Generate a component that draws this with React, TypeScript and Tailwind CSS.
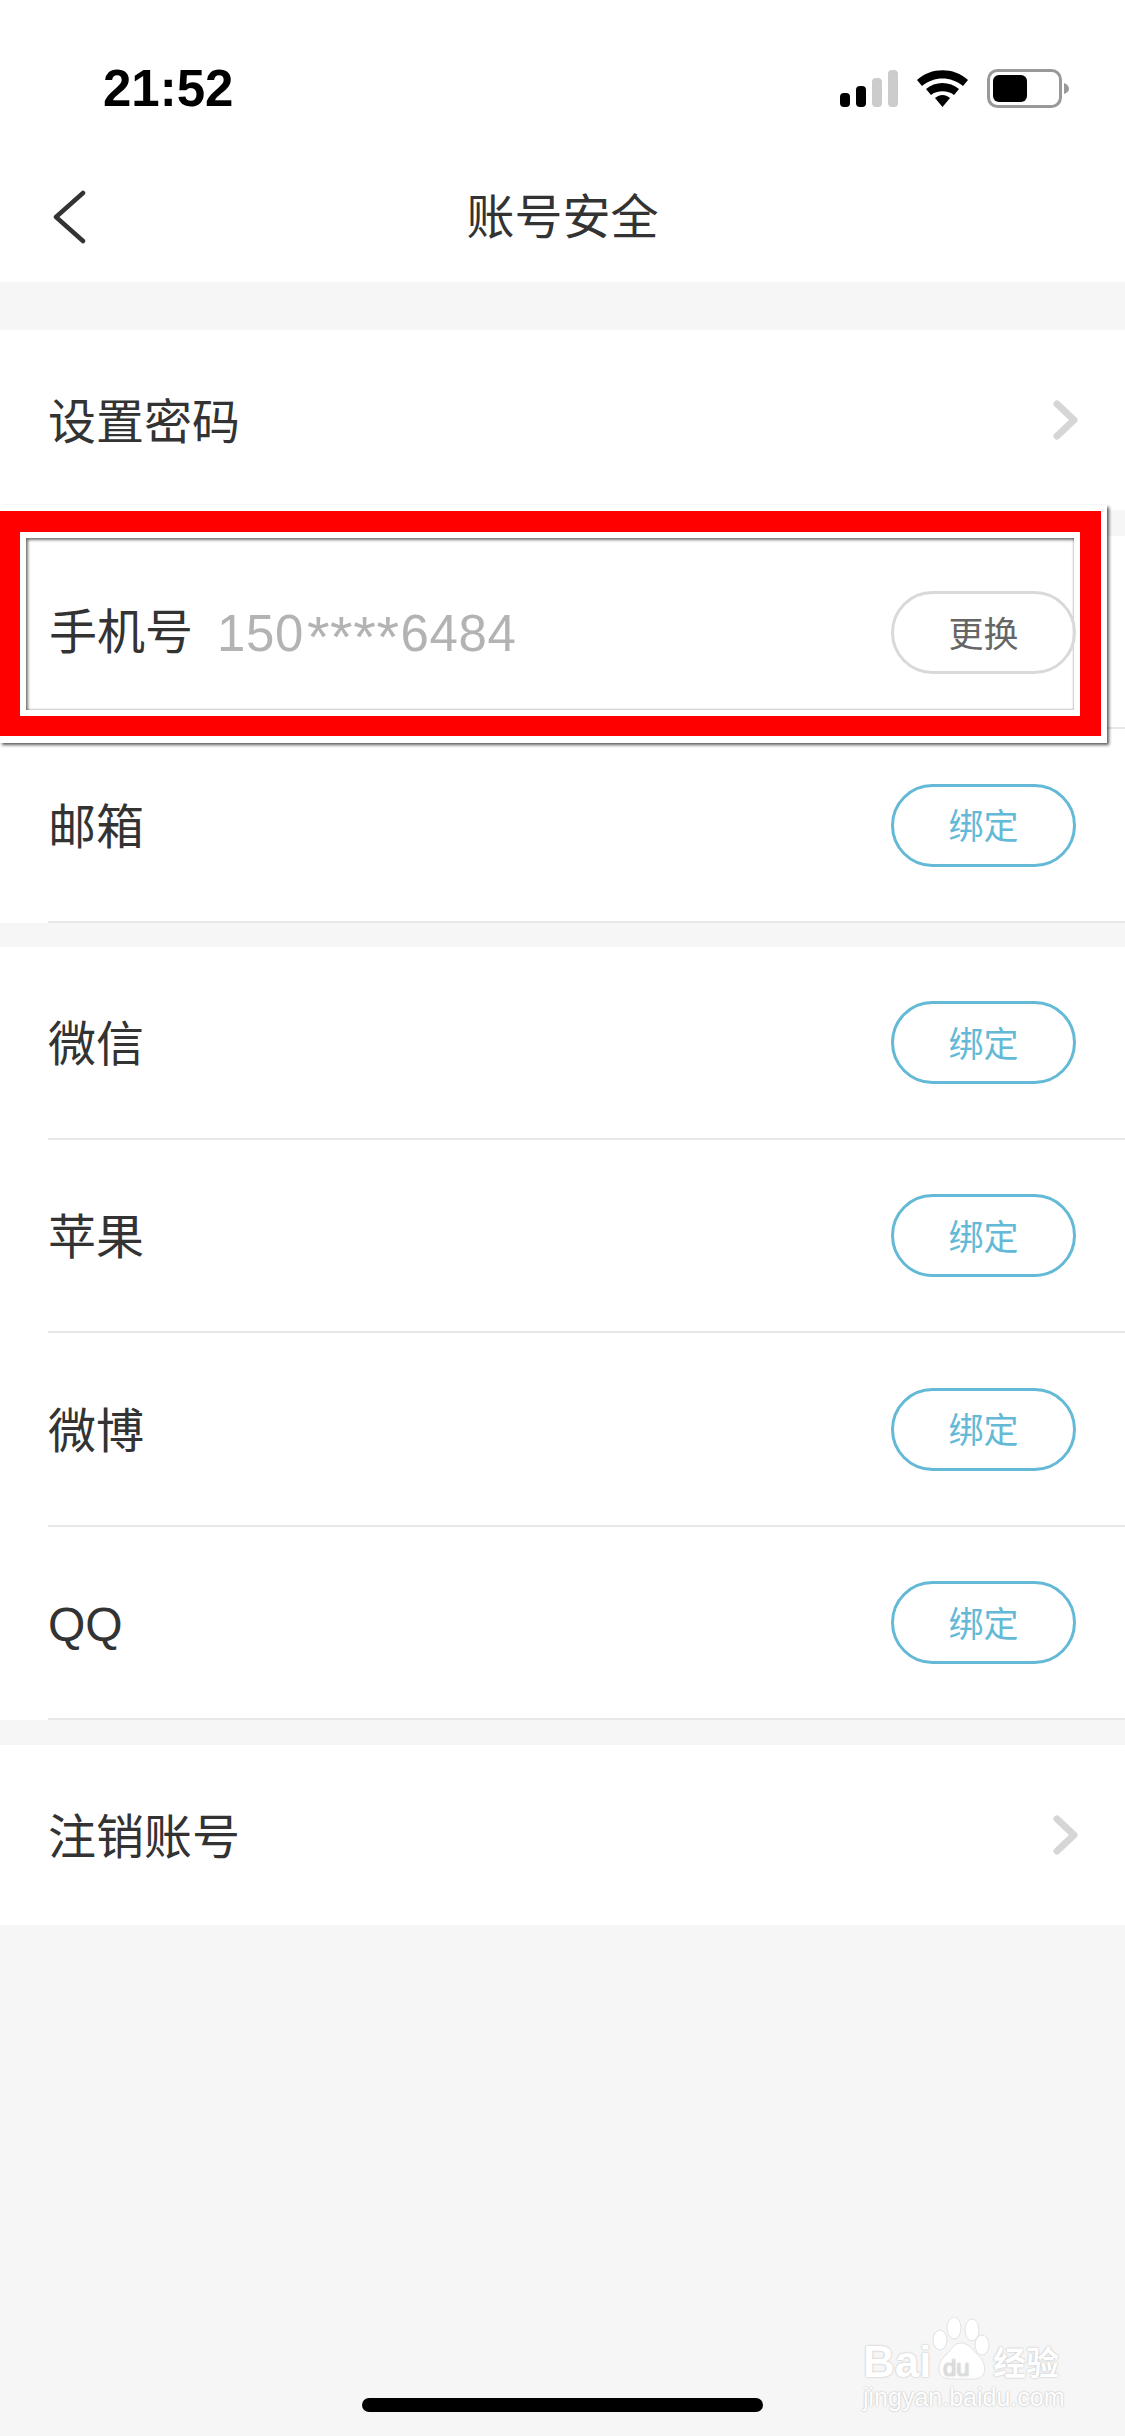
const fontCn = "font-['Liberation_Sans','Noto_Sans_CJK_SC',sans-serif]"

function BindButton({ label = "绑定", muted = false }: { label?: string; muted?: boolean }) {
  return (
    <div
      className={`flex h-[83px] w-[185px] items-center justify-center rounded-full border-[3px] pt-[5px] text-[35px] ${
        muted ? "border-[#d9d9d9] text-[#666666]" : "border-[#63b9d6] text-[#63b9d6]"
      }`}
    >
      {label}
    </div>
  )
}

function Row({ label, height, children, line = true }: { label: string; height: string; children?: React.ReactNode; line?: boolean }) {
  return (
    <div className={`ml-[48px] flex items-center justify-between pr-[49px] ${height} ${line ? "border-b-2 border-[#e8e8e8]" : ""}`}>
      <span className="pt-[5px] text-[48px] leading-none text-[#333333]">{label}</span>
      {children}
    </div>
  )
}

function Chevron() {
  return (
    <svg width="30" height="44" viewBox="0 0 30 44" fill="none" stroke="#d6d6d6" strokeWidth="7" strokeLinecap="round" strokeLinejoin="round">
      <path d="M6 6L23 22L6 38" />
    </svg>
  )
}

function LinkRow({ label }: { label: string }) {
  return (
    <div className="flex h-[180px] items-center justify-between bg-white pl-[48px] pr-[44px]">
      <span className="pt-[5px] text-[48px] leading-none text-[#333333]">{label}</span>
      <Chevron />
    </div>
  )
}

function StatusIcons() {
  return (
    <svg width="232" height="40" viewBox="0 0 232 40" className="block">
      <rect x="3" y="24" width="10" height="14" rx="4" fill="#000" />
      <rect x="19" y="17" width="10" height="21" rx="4" fill="#000" />
      <rect x="35" y="9" width="10" height="29" rx="4" fill="#cccccc" />
      <rect x="51" y="1" width="10" height="37" rx="4" fill="#cccccc" />
      <path d="M80 11C94 -2 117 -2 131 11L126 17C114 7 97 7 85 17Z" fill="#000" />
      <path d="M89 20C98 12 113 12 122 20L117 26C111 21 100 21 94 26Z" fill="#000" />
      <path d="M98 29C103 25 108 25 113 29L105.500 38Z" fill="#000" />
      <rect x="151.500" y="1.500" width="72" height="36" rx="9" fill="none" stroke="#999999" strokeWidth="3" />
      <rect x="156" y="6" width="34" height="27" rx="6" fill="#000" />
      <path d="M227 14C230 15 232 17 232 20C232 22 230 24 227 25Z" fill="#999999" />
    </svg>
  )
}

// recuadro rojo que tapa la fila del teléfono
function RedFrame() {
  return (
    <div className="absolute left-0 top-[505px] h-[238px] w-[1107px] bg-white pb-[7px] pr-[6px] pt-[6px] shadow-[2px_2px_3px_rgba(0,0,0,0.65)]">
      <div className="h-full w-full bg-[#ff0000] pb-[20px] pl-[20px] pr-[21px] pt-[21px]">
        <div className="h-full w-full bg-white p-[6px]">
          <div className="relative h-full w-full shadow-[inset_2px_2px_3px_rgba(0,0,0,0.55),inset_-1px_-1px_2px_rgba(0,0,0,0.2)]">
            <span className="absolute left-[23px] top-[71px] text-[48px] leading-none text-[#333333]">手机号</span>
            <span className="absolute left-[191px] top-[70px] flex items-start font-['Liberation_Sans'] text-[51px] leading-none tracking-[0.6px] text-[#b3b3b3]">
              150
              <span className="ml-[3px] mr-[1px] text-[58px] leading-none">****</span>
              6484
            </span>
            <div className="absolute right-[-2px] top-[53px]">
              <BindButton label="更换" muted />
            </div>
          </div>
        </div>
      </div>
    </div>
  )
}

function Watermark() {
  return (
    <div className="absolute left-[863px] top-[2317px] h-[100px] w-[205px] text-white [text-shadow:0_0_2px_rgba(0,0,0,0.3)]">
      <svg width="60" height="64" viewBox="0 0 60 64" className="absolute left-[69px] top-0" fill="#ffffff" stroke="#e2e2e2" strokeWidth="1">
        <ellipse cx="8" cy="23" rx="7" ry="10" />
        <ellipse cx="22" cy="11" rx="7" ry="11" />
        <ellipse cx="40" cy="13" rx="7" ry="11" />
        <ellipse cx="50" cy="28" rx="7" ry="10" />
        <path d="M29 26C36 26 40 32 46 38C55 46 56 62 42 62L18 62C4 62 4 46 14 38C20 32 22 26 29 26Z" />
      </svg>
      <span className="absolute left-0 top-[23px] font-['Liberation_Sans'] text-[44px] font-bold leading-none">Bai</span>
      <span className="absolute left-[80px] top-[39px] font-['Liberation_Sans'] text-[24px] leading-none text-[#dddddd]">du</span>
      <span className="absolute left-[130px] top-[30px] text-[33px] font-bold leading-none">经验</span>
      <span className="absolute left-0 top-[68px] font-['Liberation_Sans'] text-[25px] leading-none">jingyan.baidu.com</span>
    </div>
  )
}

export default function App() {
  return (
    <div className={`relative h-[2436px] w-[1125px] overflow-hidden bg-[#f6f6f6] ${fontCn}`}>
      {/* cabecera */}
      <div className="flex h-[282px] flex-col bg-white">
        <div className="flex h-[130px] items-start justify-between pl-[103px] pr-[56px] pt-[69px]">
          <span className="text-[51px] font-bold leading-[40px] text-black">21:52</span>
          <StatusIcons />
        </div>
        <div className="relative flex flex-1 items-center justify-center pt-[24px]">
          <svg width="34" height="54" viewBox="0 0 34 54" className="absolute left-[52px] top-[60px]" fill="none" stroke="#333333" strokeWidth="4.500" strokeLinecap="round" strokeLinejoin="round">
            <path d="M31 3L4 27L31 51" />
          </svg>
          <span className="text-[48px] leading-none text-[#333333]">账号安全</span>
        </div>
      </div>

      <div className="mt-[48px]">
        <LinkRow label="设置密码" />
      </div>

      <div className="mt-[26px] bg-white">
        <Row label="手机号" height="h-[193px]" />
        <Row label="邮箱" height="h-[194px]">
          <BindButton />
        </Row>
      </div>

      <div className="mt-[24px] bg-white">
        <Row label="微信" height="h-[193px]">
          <BindButton />
        </Row>
        <Row label="苹果" height="h-[193px]">
          <BindButton />
        </Row>
        <Row label="微博" height="h-[194px]">
          <BindButton />
        </Row>
        <Row label="QQ" height="h-[193px]">
          <BindButton />
        </Row>
      </div>

      <div className="mt-[25px]">
        <LinkRow label="注销账号" />
      </div>

      <RedFrame />
      <Watermark />

      {/* home indicator */}
      <div className="absolute bottom-[24px] left-[362px] h-[14px] w-[401px] rounded-full bg-black" />
    </div>
  )
}
